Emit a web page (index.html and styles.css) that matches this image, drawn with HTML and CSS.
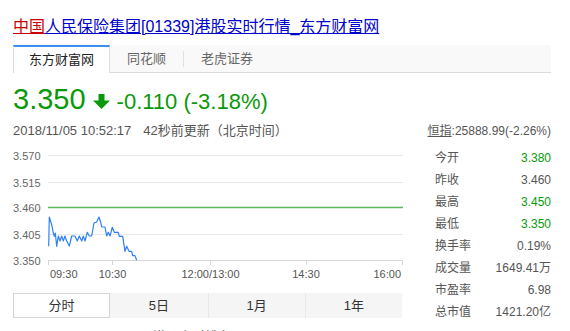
FILE: index.html
```html
<!DOCTYPE html>
<html lang="zh-CN">
<head>
<meta charset="utf-8">
<title>中国人民保险集团[01339]港股实时行情_东方财富网</title>
<link rel="stylesheet" href="styles.css">
</head>
<body>
<div class="page">
  <h1 class="title"><a href="#"><span class="red">中国</span><span class="blue">人民保险集团[01339]港股实时行情_东方财富网</span></a></h1>

  <div class="tabs">
    <span class="tab active">东方财富网</span>
    <span class="tab">同花顺</span>
    <span class="divider"></span>
    <span class="tab">老虎证券</span>
  </div>

  <div class="quote">
    <span class="price">3.350</span>
    <svg class="arrow" width="17" height="15" viewBox="0 0 17 15"><path d="M5.5 0h6v6.5H17L8.5 15 0 6.5h5.5z" fill="#0a990a"/></svg>
    <span class="change">-0.110 (-3.18%)</span>
  </div>

  <div class="info">
    <span class="time">2018/11/05 10:52:17<span class="ago">42秒前更新（北京时间）</span></span>
    <span class="hsi"><a href="#">恒指</a>:25888.99(-2.26%)</span>
  </div>

  <div class="main">
    <div class="left">
      <svg class="chart" width="392" height="134" viewBox="13 144 392 134">
        <g class="grid">
          <line x1="48" y1="152.5" x2="403" y2="152.5"/>
          <line x1="48" y1="179.5" x2="403" y2="179.5"/>
          <line x1="48" y1="231.5" x2="403" y2="231.5"/>
        </g>
        <line class="prev" x1="48" y1="204.5" x2="403" y2="204.5"/>
        <g class="axis">
          <line x1="48" y1="257.5" x2="403" y2="257.5"/>
          <line x1="48.5" y1="257" x2="48.5" y2="262"/>
          <line x1="112.5" y1="257" x2="112.5" y2="262"/>
          <line x1="210.5" y1="257" x2="210.5" y2="262"/>
          <line x1="306.5" y1="257" x2="306.5" y2="262"/>
          <line x1="402.5" y1="257" x2="402.5" y2="262"/>
        </g>
        <g class="ylab">
          <text x="13" y="156.5">3.570</text>
          <text x="13" y="183.5">3.515</text>
          <text x="13" y="209">3.460</text>
          <text x="13" y="235.8">3.405</text>
          <text x="13" y="261.7">3.350</text>
        </g>
        <g class="xlab">
          <text x="50" y="274.5">09:30</text>
          <text x="112.5" y="274.5" text-anchor="middle">10:30</text>
          <text x="210.5" y="274.5" text-anchor="middle">12:00/13:00</text>
          <text x="306" y="274.5" text-anchor="middle">14:30</text>
          <text x="401" y="274.5" text-anchor="end">16:00</text>
        </g>
        <polyline class="line" points="48.7,243.3 49.3,214 51.7,221.7 53.3,230 54.3,233.3 55.3,230 56.7,243.3 58.3,233 60,238 61.7,233 63.3,238 65,233 66.7,238 69.3,243 71.7,233 75,233 77.3,238 79.3,233 81.7,238 83.3,233 85,238 87.3,229.3 89.3,233 91.7,233 94,220 96.7,219 99,214 100.7,219.3 101.7,224 105,224 106.7,233 108.3,229.3 110,233 112.3,224.3 114.3,229.3 118.3,229.3 119.3,233.3 122.7,233.3 125,248.3 126.7,243.3 129,248.3 131.7,248.3 132.7,252.7 135,252.7 136.7,257.3"/>
      </svg>

      <div class="periods">
        <span class="period active">分时</span>
        <span class="period">5日</span>
        <span class="period">1月</span>
        <span class="period">1年</span>
      </div>
      <div class="more">港股实时排名</div>
    </div>

    <dl class="stats">
      <div class="row"><dt>今开</dt><dd class="down">3.380</dd></div>
      <div class="row"><dt>昨收</dt><dd>3.460</dd></div>
      <div class="row"><dt>最高</dt><dd class="down">3.450</dd></div>
      <div class="row"><dt>最低</dt><dd class="down">3.350</dd></div>
      <div class="row"><dt>换手率</dt><dd>0.19%</dd></div>
      <div class="row"><dt>成交量</dt><dd>1649.41万</dd></div>
      <div class="row"><dt>市盈率</dt><dd>6.98</dd></div>
      <div class="row"><dt>总市值</dt><dd>1421.20亿</dd></div>
    </dl>
  </div>
</div>
</body>
</html>
```

FILE: styles.css
```css
html, body {
  margin: 0;
  padding: 0;
  height: 331px;
  overflow: hidden;
  background: #fff;
}

body {
  font-family: "Liberation Sans", "Noto Sans CJK SC", sans-serif;
  color: #555;
}

.page {
  width: 538px;
  padding-left: 13px;
  padding-top: 18px;
}

.title {
  margin: 0;
  font-size: 16px;
  line-height: 18px;
  font-weight: normal;
}

.title a { text-decoration: none; }
.title .red { color: #cc0000; text-decoration: underline; }
.title .blue { color: #0000cc; text-decoration: underline; }

.tabs {
  margin-top: 9px;
  display: flex;
  align-items: flex-start;
  height: 28px;
  box-sizing: border-box;
  background: #f9f9f9;
  border-bottom: 1px solid #dcdcdc;
}

.tab {
  font-size: 13px;
  line-height: 27px;
  padding: 0 17px;
  color: #666;
}

.tab.active {
  box-sizing: border-box;
  height: 28px;
  line-height: 26px;
  padding: 0 15px;
  border-top: 2px solid #3c8ff0;
  border-left: 1px solid #dcdcdc;
  border-right: 1px solid #dcdcdc;
  background: #fff;
  color: #222;
}

.divider {
  width: 1px;
  height: 16px;
  margin-top: 6px;
  background: #e0e0e0;
}

.quote {
  margin-top: 11px;
  display: flex;
  align-items: baseline;
  line-height: 30px;
  color: #0a990a;
}

.price {
  font-size: 29px;
}

.arrow {
  margin-left: 7px;
  align-self: center;
  margin-top: 2px;
}

.change {
  margin-left: 7px;
  font-size: 22px;
}

.info {
  margin-top: 6px;
  display: flex;
  justify-content: space-between;
  align-items: baseline;
  line-height: 16px;
}

.time {
  font-size: 13px;
  color: #555;
}

.ago {
  margin-left: 12px;
}

.hsi {
  font-size: 12px;
  color: #555;
}

.hsi a {
  color: #555;
  text-decoration: underline;
}

.main {
  margin-top: 8px;
  display: flex;
  align-items: flex-start;
}

.left {
  width: 392px;
}

.chart {
  display: block;
}

.chart .grid line {
  stroke: #e8e8e8;
  stroke-width: 1;
}

.chart .prev {
  stroke: #5cb85c;
  stroke-width: 1.6;
}

.chart .axis line {
  stroke: #d6d6d6;
  stroke-width: 1;
}

.chart text {
  font-family: "Liberation Sans", sans-serif;
  font-size: 11px;
}

.chart .ylab text { fill: #666; }
.chart .xlab text { fill: #555; }

.chart .line {
  fill: none;
  stroke: #2f80f5;
  stroke-width: 1.2;
  stroke-linejoin: round;
}

.periods {
  margin-top: 12px;
  width: 389px;
  height: 25px;
  display: grid;
  grid-template-columns: repeat(4, 1fr);
  background: #f5f5f5;
}

.period {
  font-size: 13px;
  line-height: 25px;
  text-align: center;
  color: #333;
  border-left: 1px solid #e8e8e8;
}

.period:first-child { border-left: none; }

.period.active {
  box-sizing: border-box;
  line-height: 23px;
  background: #fff;
  border: 1px solid #d5d5d5;
}

.period.active + .period { border-left: none; }

.more {
  margin-top: 11px;
  padding-left: 140px;
  font-size: 13px;
  line-height: 16px;
  color: #555;
}

.stats {
  margin: 0 0 0 20px;
  width: 126px;
}

.row {
  display: flex;
  justify-content: space-between;
  font-size: 12px;
  line-height: 22px;
  height: 22px;
}

.row dt, .row dd {
  margin: 0;
  color: #555;
}

.row dt { padding-left: 10px; }

.row dd.down { color: #0a990a; }
```
